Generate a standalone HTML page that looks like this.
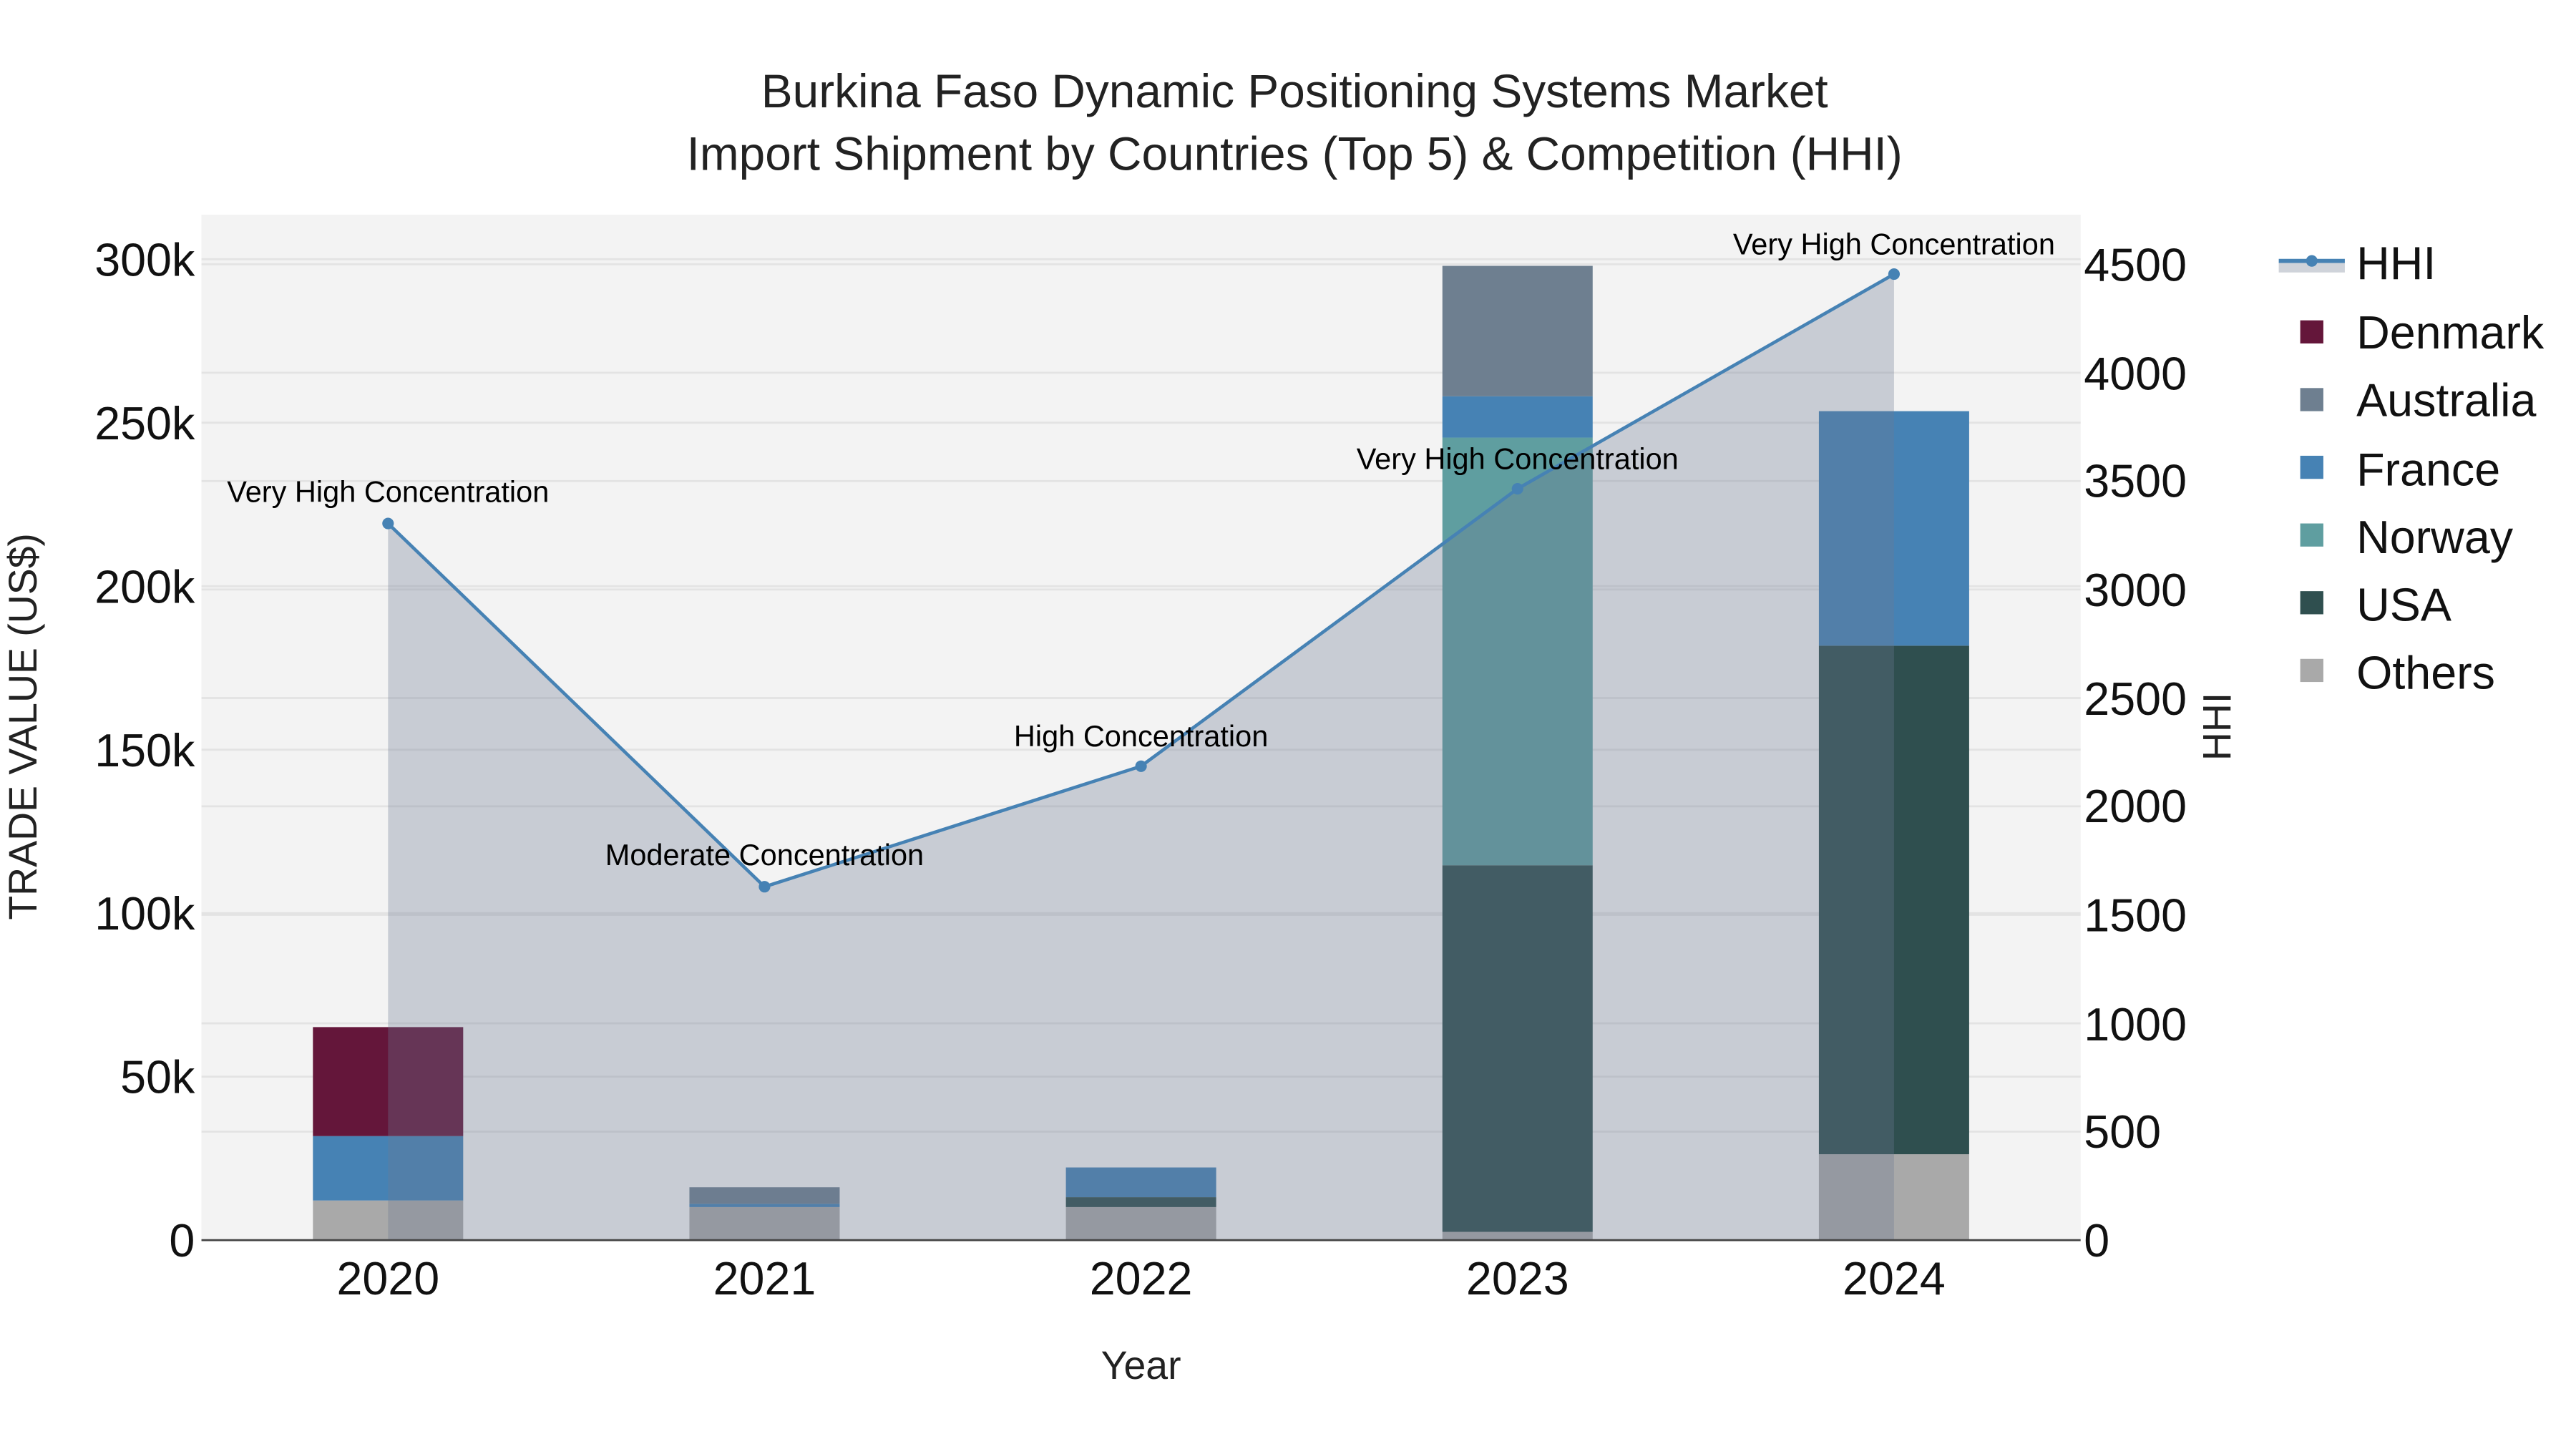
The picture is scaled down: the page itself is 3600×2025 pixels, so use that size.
<!DOCTYPE html>
<html><head><meta charset="utf-8"><style>html,body{margin:0;padding:0;background:#fff}svg{display:block}</style></head>
<body>
<svg width="3600" height="2025" viewBox="0 0 1560 877.5" preserveAspectRatio="none" xmlns="http://www.w3.org/2000/svg" font-family="Liberation Sans, sans-serif">
<rect x="0" y="0" width="1560" height="877.5" fill="#fff"/>
<rect x="122" y="130" width="1138" height="621" fill="#f3f3f3"/>
<g stroke="#e3e3e3" stroke-width="1.2">
<line x1="122" x2="1260" y1="652" y2="652"/><line x1="122" x2="1260" y1="553" y2="553"/><line x1="122" x2="1260" y1="454" y2="454"/><line x1="122" x2="1260" y1="355" y2="355"/><line x1="122" x2="1260" y1="256" y2="256"/><line x1="122" x2="1260" y1="157" y2="157"/>
<line x1="122" x2="1260" y1="685.3" y2="685.3"/><line x1="122" x2="1260" y1="619.7" y2="619.7"/><line x1="122" x2="1260" y1="554" y2="554"/><line x1="122" x2="1260" y1="488.3" y2="488.3"/><line x1="122" x2="1260" y1="422.7" y2="422.7"/><line x1="122" x2="1260" y1="357" y2="357"/><line x1="122" x2="1260" y1="291.3" y2="291.3"/><line x1="122" x2="1260" y1="225.7" y2="225.7"/><line x1="122" x2="1260" y1="160" y2="160"/>
</g>
<g>
<rect x="189.5" y="727" width="91" height="24" fill="#a9a9a9"/>
<rect x="189.5" y="688" width="91" height="39" fill="#4682b4"/>
<rect x="189.5" y="622" width="91" height="66" fill="#64163a"/>
<rect x="417.5" y="731" width="91" height="20" fill="#a9a9a9"/>
<rect x="417.5" y="729" width="91" height="2" fill="#4682b4"/>
<rect x="417.5" y="719" width="91" height="10" fill="#6e7f90"/>
<rect x="645.5" y="731" width="91" height="20" fill="#a9a9a9"/>
<rect x="645.5" y="725" width="91" height="6" fill="#2f4f4f"/>
<rect x="645.5" y="707" width="91" height="18" fill="#4682b4"/>
<rect x="873.5" y="746" width="91" height="5" fill="#a9a9a9"/>
<rect x="873.5" y="524" width="91" height="222" fill="#2f4f4f"/>
<rect x="873.5" y="265" width="91" height="259" fill="#5f9ea0"/>
<rect x="873.5" y="240" width="91" height="25" fill="#4682b4"/>
<rect x="873.5" y="161" width="91" height="79" fill="#6e7f90"/>
<rect x="1101.5" y="699" width="91" height="52" fill="#a9a9a9"/>
<rect x="1101.5" y="391" width="91" height="308" fill="#2f4f4f"/>
<rect x="1101.5" y="249" width="91" height="142" fill="#4682b4"/>
</g>
<polygon points="235,751 235,317 463,537 691,464 919,296 1147,166 1147,751" fill="rgba(109,121,146,0.32)"/>
<line x1="122" x2="1260" y1="751" y2="751" stroke="#444" stroke-width="1.2"/>
<polyline points="235,317 463,537 691,464 919,296 1147,166" fill="none" stroke="#4682b4" stroke-width="2"/>
<g fill="#4682b4"><circle cx="235" cy="317" r="3.5"/><circle cx="463" cy="537" r="3.5"/><circle cx="691" cy="464" r="3.5"/><circle cx="919" cy="296" r="3.5"/><circle cx="1147" cy="166" r="3.5"/></g>
<g font-size="18" text-anchor="middle" fill="#000">
<text x="235" y="304">Very High Concentration</text>
<text x="463" y="524">Moderate Concentration</text>
<text x="691" y="452">High Concentration</text>
<text x="919" y="284">Very High Concentration</text>
<text x="1147" y="154">Very High Concentration</text>
</g>
<g font-size="28.5" fill="#222" text-anchor="middle">
<text x="784" y="65">Burkina Faso Dynamic Positioning Systems Market</text>
<text x="784" y="103">Import Shipment by Countries (Top 5) &amp; Competition (HHI)</text>
</g>
<g font-size="28" fill="#111" text-anchor="end">
<text x="118" y="761">0</text><text x="118" y="662">50k</text><text x="118" y="563">100k</text><text x="118" y="464">150k</text><text x="118" y="365">200k</text><text x="118" y="266">250k</text><text x="118" y="167">300k</text>
</g>
<g font-size="28" fill="#111">
<text x="1262" y="761">0</text><text x="1262" y="695">500</text><text x="1262" y="630">1000</text><text x="1262" y="564">1500</text><text x="1262" y="498">2000</text><text x="1262" y="433">2500</text><text x="1262" y="367">3000</text><text x="1262" y="301">3500</text><text x="1262" y="236">4000</text><text x="1262" y="170">4500</text>
</g>
<g font-size="28" fill="#111" text-anchor="middle">
<text x="235" y="784">2020</text><text x="463" y="784">2021</text><text x="691" y="784">2022</text><text x="919" y="784">2023</text><text x="1147" y="784">2024</text>
</g>
<text x="691" y="835" font-size="24" fill="#222" text-anchor="middle">Year</text>
<text transform="translate(22,440) rotate(-90)" font-size="24" fill="#222" text-anchor="middle">TRADE VALUE (US$)</text>
<text transform="translate(1351,440) rotate(-90)" font-size="24" fill="#222" text-anchor="middle">HHI</text>
<rect x="1380" y="159" width="40" height="6" fill="#cfd3da"/>
<line x1="1380" x2="1420" y1="158" y2="158" stroke="#4682b4" stroke-width="2.5"/>
<circle cx="1400" cy="158" r="3.5" fill="#4682b4"/>
<g font-size="28" fill="#111">
<text x="1427" y="169">HHI</text>
<text x="1427" y="211">Denmark</text>
<text x="1427" y="252">Australia</text>
<text x="1427" y="294">France</text>
<text x="1427" y="335">Norway</text>
<text x="1427" y="376">USA</text>
<text x="1427" y="417">Others</text>
</g>
<rect x="1393" y="194" width="14" height="14" fill="#64163a"/>
<rect x="1393" y="235" width="14" height="14" fill="#6e7f90"/>
<rect x="1393" y="276" width="14" height="14" fill="#4682b4"/>
<rect x="1393" y="317" width="14" height="14" fill="#5f9ea0"/>
<rect x="1393" y="358" width="14" height="14" fill="#2f4f4f"/>
<rect x="1393" y="399" width="14" height="14" fill="#a9a9a9"/>
</svg>
</body></html>
